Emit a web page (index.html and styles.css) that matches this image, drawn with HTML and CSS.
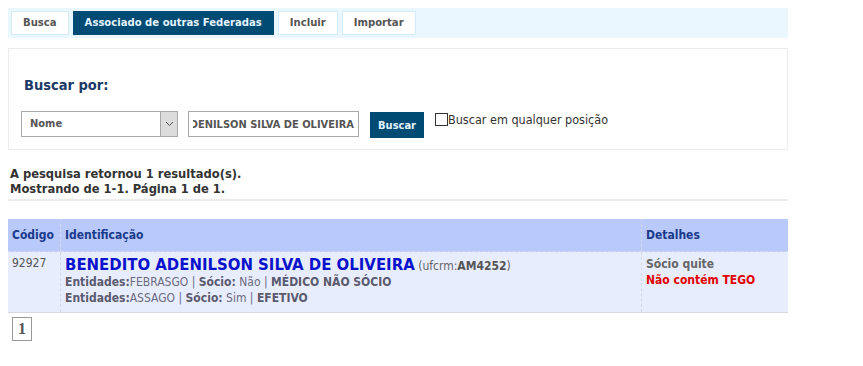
FILE: index.html
```html
<!DOCTYPE html>
<html lang="pt-BR">
<head>
    <meta charset="UTF-8">
    <meta name="viewport" content="width=device-width, initial-scale=1.0">
    <title>Busca de Associados</title>
    <link rel="stylesheet" href="styles.css">
</head>
<body>
    <div class="tabs">
        <a class="tab" href="#">Busca</a>
        <a class="tab active" href="#">Associado de outras Federadas</a>
        <a class="tab" href="#">Incluir</a>
        <a class="tab" href="#">Importar</a>
    </div>

    <div class="search-panel">
        <h2 class="search-title">Buscar por:</h2>
        <div class="search-row">
            <div class="select-box">
                <span class="select-value">Nome</span>
                <span class="select-arrow">
                    <svg width="9" height="6" viewBox="0 0 9 6"><path d="M1 1 L4.5 4.5 L8 1" fill="none" stroke="#555" stroke-width="1"/></svg>
                </span>
            </div>
            <input class="search-input" type="text" value="BENEDITO ADENILSON SILVA DE OLIVEIRA">
            <button class="search-button">Buscar</button>
            <label class="any-position"><span class="checkbox"></span>Buscar em qualquer posição</label>
        </div>
    </div>

    <div class="results-info">
        A pesquisa retornou 1 resultado(s).<br>
        Mostrando de 1-1. Página 1 de 1.
    </div>

    <table class="results">
        <thead>
            <tr>
                <th class="col-code">Código</th>
                <th class="col-ident">Identificação</th>
                <th class="col-details">Detalhes</th>
            </tr>
        </thead>
        <tbody>
            <tr>
                <td class="col-code code">92927</td>
                <td class="col-ident">
                    <span class="name">BENEDITO ADENILSON SILVA DE OLIVEIRA</span>
                    <span class="crm">(ufcrm:<b>AM4252</b>)</span>
                    <div class="entity"><b>Entidades:</b>FEBRASGO | <b>Sócio:</b> Não | <b>MÉDICO NÃO SÓCIO</b></div>
                    <div class="entity"><b>Entidades:</b>ASSAGO | <b>Sócio:</b> Sim | <b>EFETIVO</b></div>
                </td>
                <td class="col-details">
                    <div class="status-ok">Sócio quite</div>
                    <div class="status-alert">Não contém TEGO</div>
                </td>
            </tr>
        </tbody>
    </table>

    <div class="pager">
        <span class="page">1</span>
    </div>
</body>
</html>
```

FILE: styles.css
```css
body {
    margin: 8px;
    font-family: "DejaVu Sans Condensed", "DejaVu Sans", sans-serif;
    font-size: 12px;
    color: #333;
    background: #fff;
}

.tabs {
    display: flex;
    flex-flow: row nowrap;
    gap: 4px;
    width: 774px;
    height: 24px;
    padding: 3px;
    background: #eaf7ff;
}

.tab {
    display: block;
    padding: 0 11px;
    line-height: 22px;
    border: 1px solid #d4ecfa;
    background: #fff;
    color: #555;
    font-size: 11.2px;
    font-weight: bold;
    text-decoration: none;
}

.tab.active {
    background: #004b74;
    border-color: #004b74;
    color: #e4f3ff;
}

.search-panel {
    margin-top: 10px;
    width: 754px;
    height: 74px;
    padding: 26px 12px 0 12px;
    border: 1px solid #ececec;
}

.search-title {
    margin: 0 0 16px 0;
    padding-left: 3px;
    font-size: 14.5px;
    line-height: 20px;
    color: #1c3a66;
}

.search-row {
    display: flex;
    flex-flow: row nowrap;
    align-items: flex-start;
}

.select-box {
    display: flex;
    align-items: stretch;
    width: 155px;
    height: 24px;
    border: 1px solid #a9a9a9;
    background: #fff;
}

.select-value {
    flex: 1;
    padding-left: 8px;
    line-height: 24px;
    font-size: 11px;
    font-weight: bold;
    color: #555;
}

.select-arrow {
    display: flex;
    align-items: center;
    justify-content: center;
    width: 16px;
    border-left: 1px solid #a9a9a9;
    background: #dcdcdc;
}

.search-input {
    box-sizing: border-box;
    margin: 0 0 0 10px;
    width: 171px;
    height: 26px;
    padding: 0 4px;
    border: 1px solid #a9a9a9;
    direction: rtl;
    font-family: inherit;
    font-size: 11px;
    font-weight: bold;
    color: #555;
    outline: none;
}

.search-button {
    margin: 1px 0 0 11px;
    width: 54px;
    height: 26px;
    padding: 0;
    border: 1px solid #004b74;
    background: #004b74;
    color: #e4f3ff;
    font-family: inherit;
    font-size: 11px;
    font-weight: bold;
}

.any-position {
    display: flex;
    align-items: flex-start;
    margin: 2px 0 0 11px;
    line-height: 14px;
    font-size: 12.5px;
    color: #333;
}

.checkbox {
    width: 11px;
    height: 11px;
    border: 1px solid #333;
    background: #fff;
}

.results-info {
    margin-top: 16px;
    padding: 0 2px 3px 2px;
    width: 776px;
    line-height: 15px;
    font-size: 12.8px;
    font-weight: bold;
    color: #333;
    border-bottom: 2px solid #ececec;
}

.results {
    margin-top: 18px;
    width: 780px;
    border-collapse: collapse;
}

.results th {
    height: 32px;
    padding: 0 4px;
    background: #b8c9fa;
    color: #1b3a8c;
    text-align: left;
    font-weight: bold;
}

.results td {
    height: 56px;
    padding: 4px 4px 0 4px;
    background: #e8edfd;
    vertical-align: top;
    border-top: 1px dashed #d2d8ec;
    border-bottom: 1px solid #d6d9e4;
}

.results th + th,
.results td + td {
    border-left: 1px dashed #d2d8ec;
}

.col-code {
    width: 44px;
}

.col-details {
    width: 138px;
}

.code {
    color: #555;
    line-height: 15px;
}

.name {
    font-size: 16.6px;
    font-weight: bold;
    color: #0a12cc;
    line-height: 18px;
}

.crm {
    color: #666;
}

.crm b {
    color: #555;
}

.entity {
    line-height: 16px;
    color: #6a6a7e;
}

.entity b {
    color: #5a5a6e;
}

.status-ok {
    line-height: 16px;
    font-weight: bold;
    color: #666;
}

.status-alert {
    line-height: 16px;
    font-weight: bold;
    color: #e00000;
}

.pager {
    margin-top: 4px;
    padding-left: 4px;
}

.page {
    display: inline-block;
    width: 18px;
    height: 22px;
    line-height: 22px;
    text-align: center;
    border: 1px solid #999;
    font-family: "Liberation Serif", serif;
    font-size: 16px;
    font-weight: bold;
    color: #555;
}
```
